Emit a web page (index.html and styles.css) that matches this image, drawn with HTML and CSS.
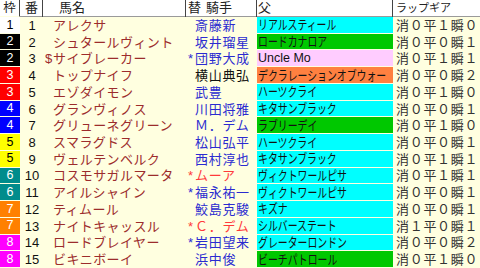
FILE: index.html
```html
<!DOCTYPE html>
<html lang="ja">
<head>
<meta charset="utf-8">
<link rel="stylesheet" href="styles.css">
</head>
<body>
<div class="table">
  <div class="row head">
    <div class="c-waku hd">枠</div>
    <div class="c-num hd">番</div>
    <div class="c-name hd"><span class="hname">馬名</span></div>
    <div class="c-jockey hd"><span class="kae">替</span><span class="hj">騎手</span></div>
    <div class="c-sire hd"><span class="hs">父</span></div>
    <div class="c-lap hd"><span class="hl">ラップギア</span></div>
  </div>
  <div class="body">
    <div class="row"><div class="c-waku w1">1</div><div class="c-num">1</div><div class="c-name"><span class="pre"></span>アレクサ</div><div class="c-jockey jb"><span class="pre"></span>斎藤新</div><div class="c-sire cy"><span class="sn">リアルスティール</span></div><div class="c-lap">消０平１瞬０</div></div>
    <div class="row"><div class="c-waku w2">2</div><div class="c-num">2</div><div class="c-name"><span class="pre"></span>シュタールヴィント</div><div class="c-jockey jb"><span class="pre"></span>坂井瑠星</div><div class="c-sire gr"><span class="sn">ロードカナロア</span></div><div class="c-lap">消０平０瞬１</div></div>
    <div class="row"><div class="c-waku w2">2</div><div class="c-num">3</div><div class="c-name"><span class="pre">$</span>サイブレーカー</div><div class="c-jockey jb"><span class="pre">*</span>団野大成</div><div class="c-sire pk latin">Uncle Mo</div><div class="c-lap">消０平１瞬１</div></div>
    <div class="row"><div class="c-waku w3">3</div><div class="c-num">4</div><div class="c-name"><span class="pre"></span>トップナイフ</div><div class="c-jockey jk"><span class="pre"></span>横山典弘</div><div class="c-sire or"><span class="sn">デクラレーションオブウォー</span></div><div class="c-lap">消０平０瞬２</div></div>
    <div class="row"><div class="c-waku w3">3</div><div class="c-num">5</div><div class="c-name"><span class="pre"></span>エゾダイモン</div><div class="c-jockey jb"><span class="pre"></span>武豊</div><div class="c-sire cy"><span class="sn">ハーツクライ</span></div><div class="c-lap">消０平１瞬０</div></div>
    <div class="row"><div class="c-waku w4">4</div><div class="c-num">6</div><div class="c-name"><span class="pre"></span>グランヴィノス</div><div class="c-jockey jb"><span class="pre"></span>川田将雅</div><div class="c-sire cy"><span class="sn">キタサンブラック</span></div><div class="c-lap">消０平０瞬１</div></div>
    <div class="row"><div class="c-waku w4">4</div><div class="c-num">7</div><div class="c-name"><span class="pre"></span>グリューネグリーン</div><div class="c-jockey jb"><span class="pre"></span>Ｍ．デム</div><div class="c-sire gr"><span class="sn">ラブリーデイ</span></div><div class="c-lap">消０平１瞬０</div></div>
    <div class="row"><div class="c-waku w5">5</div><div class="c-num">8</div><div class="c-name"><span class="pre"></span>スマラグドス</div><div class="c-jockey jb"><span class="pre"></span>松山弘平</div><div class="c-sire cy"><span class="sn">ハーツクライ</span></div><div class="c-lap">消０平０瞬１</div></div>
    <div class="row"><div class="c-waku w5">5</div><div class="c-num">9</div><div class="c-name"><span class="pre"></span>ヴェルテンベルク</div><div class="c-jockey jb"><span class="pre"></span>西村淳也</div><div class="c-sire cy"><span class="sn">キタサンブラック</span></div><div class="c-lap">消０平１瞬１</div></div>
    <div class="row"><div class="c-waku w6">6</div><div class="c-num">10</div><div class="c-name"><span class="pre"></span>コスモサガルマータ</div><div class="c-jockey jr"><span class="pre">*</span>ムーア</div><div class="c-sire cy"><span class="sn">ヴィクトワールピサ</span></div><div class="c-lap">消０平１瞬１</div></div>
    <div class="row"><div class="c-waku w6">6</div><div class="c-num">11</div><div class="c-name"><span class="pre"></span>アイルシャイン</div><div class="c-jockey jb"><span class="pre">*</span>福永祐一</div><div class="c-sire cy"><span class="sn">ヴィクトワールピサ</span></div><div class="c-lap">消０平０瞬１</div></div>
    <div class="row"><div class="c-waku w7">7</div><div class="c-num">12</div><div class="c-name"><span class="pre"></span>ティムール</div><div class="c-jockey jb"><span class="pre"></span>鮫島克駿</div><div class="c-sire cy"><span class="sn">キズナ</span></div><div class="c-lap">消０平０瞬１</div></div>
    <div class="row"><div class="c-waku w7">7</div><div class="c-num">13</div><div class="c-name"><span class="pre"></span>ナイトキャッスル</div><div class="c-jockey jr"><span class="pre">*</span>Ｃ．デム</div><div class="c-sire cy"><span class="sn">シルバーステート</span></div><div class="c-lap">消１平０瞬１</div></div>
    <div class="row"><div class="c-waku w8">8</div><div class="c-num">14</div><div class="c-name"><span class="pre"></span>ロードブレイヤー</div><div class="c-jockey jb"><span class="pre">*</span>岩田望来</div><div class="c-sire cy"><span class="sn">グレーターロンドン</span></div><div class="c-lap">消０平０瞬２</div></div>
    <div class="row"><div class="c-waku w8">8</div><div class="c-num">15</div><div class="c-name"><span class="pre"></span>ビキニボーイ</div><div class="c-jockey jb"><span class="pre"></span>浜中俊</div><div class="c-sire gr"><span class="sn">ビーチパトロール</span></div><div class="c-lap">消０平１瞬０</div></div>
  </div>
</div>
</body>
</html>
```
FILE: styles.css
```css
html, body {
  margin: 0;
  padding: 0;
  background: #ffffe0;
}
body {
  width: 480px;
  height: 268px;
  overflow: hidden;
  font-family: "Liberation Sans", "Noto Sans CJK JP", sans-serif;
  font-size: 13px;
  color: #000;
}
.table {
  display: flex;
  flex-direction: column;
  height: 268px;
}
.row {
  display: grid;
  grid-template-columns: 21px 22px 143px 71px 136px 1fr;
  align-items: stretch;
}
.head {
  height: 16px;
  background: #ffffff;
  border-bottom: 1px solid #9a9a9a;
}
.hd {
  border-right: 1px solid #444;
  line-height: 16px;
  font-size: 13px;
  color: #222;
  white-space: nowrap;
}
.head .c-waku, .head .c-num { text-align: center; }
.head .c-lap { border-right: none; }
.hname { padding-left: 16px; }
.kae { padding-left: 2px; }
.hj { padding-left: 5px; }
.hs { padding-left: 1px; }
.hl { padding-left: 3px; font-size: 11px; }
.body {
  flex: 1;
  display: flex;
  flex-direction: column;
}
.body .row {
  flex: 1;
  min-height: 0;
}
.body .row > div {
  display: flex;
  align-items: center;
  white-space: nowrap;
  overflow: hidden;
  line-height: 1;
}
.c-waku {
  justify-content: center;
  font-size: 12.5px;
  border-bottom: 1px solid #ffffe0;
  margin-right: 1px;
}
.body .c-num {
  justify-content: center;
  font-size: 13px;
  color: #111;
}
.body .c-name {
  color: #9c2c2c;
  letter-spacing: 0.4px;
}
.pre {
  display: inline-block;
  width: 10px;
  flex: none;
  text-align: center;
  letter-spacing: 0;
}
.body .c-name .pre { width: 9px; margin-left: 1px; }
.body .c-jockey { letter-spacing: 0.7px; }
.body .c-jockey .pre { width: 9px; }
.jb { color: #2b2bd0; }
.jk { color: #111; }
.jr { color: #ff3a3a; }
.body .c-sire {
  border-bottom: 1px solid #ffffe0;
  padding-left: 1px;
  color: #111;
}
.sn {
  display: inline-block;
  font-size: 13px;
  transform: scaleX(0.76);
  transform-origin: left center;
}
.body .c-sire.latin { font-size: 12.5px; }
.cy { background: #00ffff; }
.gr { background: #00c800; }
.pk { background: #ffccff; }
.or { background: #ff8040; }
.body .c-lap {
  padding-left: 3px;
  color: #333;
  letter-spacing: 0.7px;
}
.w1 { background: #ffffff; color: #000; }
.w2 { background: #000000; color: #fff; }
.w3 { background: #ff0000; color: #fff; }
.w4 { background: #0000ff; color: #fff; }
.w5 { background: #ffff00; color: #000; }
.w6 { background: #008c8c; color: #fff; }
.w7 { background: #ff8000; color: #fff; }
.w8 { background: #ff00ff; color: #fff; }
```
